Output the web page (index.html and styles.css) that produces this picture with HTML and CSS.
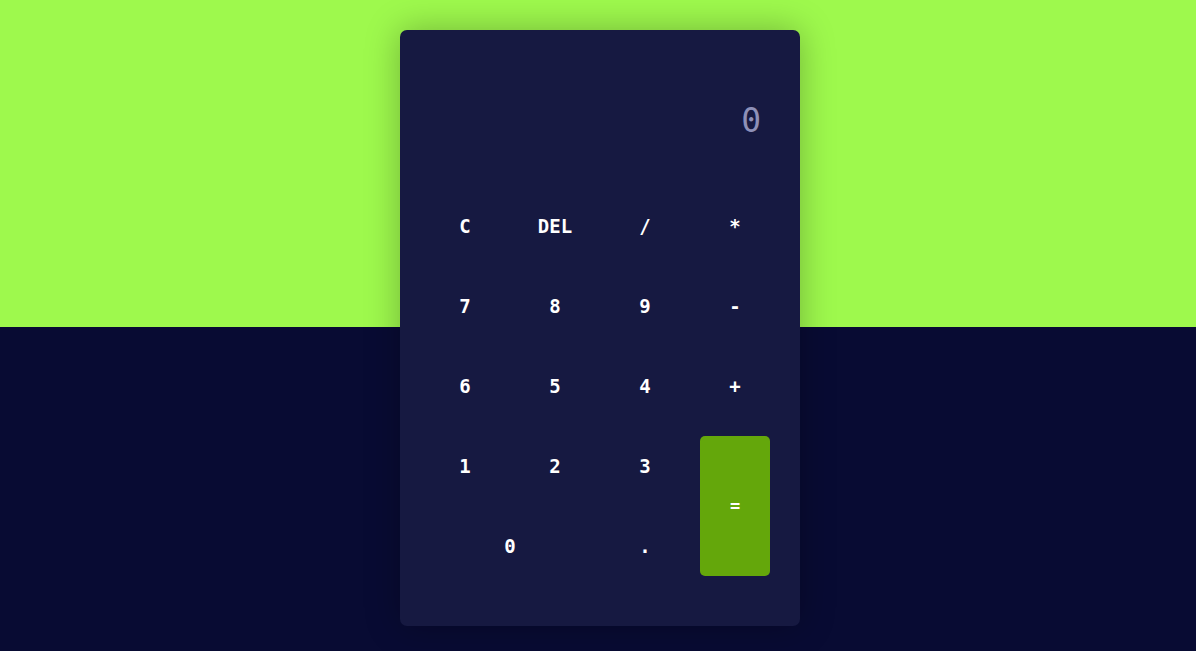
FILE: index.html
```html
<!DOCTYPE html>
<html>
<head>
<meta charset="utf-8">
<link rel="stylesheet" href="styles.css">
</head>
<body>
<div class="calc">
  <div class="display">0</div>
  <div class="keys">
    <button class="key">C</button>
    <button class="key">DEL</button>
    <button class="key">/</button>
    <button class="key">*</button>
    <button class="key">7</button>
    <button class="key">8</button>
    <button class="key">9</button>
    <button class="key">-</button>
    <button class="key">6</button>
    <button class="key">5</button>
    <button class="key">4</button>
    <button class="key">+</button>
    <button class="key">1</button>
    <button class="key">2</button>
    <button class="key">3</button>
    <button class="key equal">=</button>
    <button class="key zero">0</button>
    <button class="key">.</button>
  </div>
</div>
</body>
</html>
```
FILE: styles.css
```css
html, body {
  margin: 0;
  padding: 0;
  height: 100%;
}
body {
  background: linear-gradient(to bottom, #9ef94d 0, #9ef94d 327px, #080b33 327px, #080b33 100%);
  font-family: "DejaVu Sans Mono", "Liberation Mono", monospace;
  display: flex;
  justify-content: center;
  padding: 30px 0 0 4px;
  box-sizing: border-box;
}
.calc {
  width: 400px;
  height: 596px;
  background: #161941;
  border-radius: 7px;
  box-shadow: 0 0 35px rgba(0, 0, 0, 0.28);
  padding: 0 30px;
  box-sizing: border-box;
  display: flex;
  flex-direction: column;
}
.display {
  height: 166px;
  box-sizing: border-box;
  padding: 71px 9px 0 0;
  text-align: right;
  color: #8e90b8;
  font-size: 33px;
  line-height: 40px;
}
.keys {
  display: grid;
  grid-template-columns: repeat(4, 70px);
  grid-auto-rows: 60px;
  gap: 20px;
}
.key {
  border: none;
  background: transparent;
  color: #ffffff;
  font-family: inherit;
  font-size: 19px;
  font-weight: bold;
  border-radius: 5px;
  padding: 0;
}
.equal {
  grid-row: span 2;
  background: #64a70b;
  font-size: 17px;
}
.zero {
  grid-column: span 2;
}
```
